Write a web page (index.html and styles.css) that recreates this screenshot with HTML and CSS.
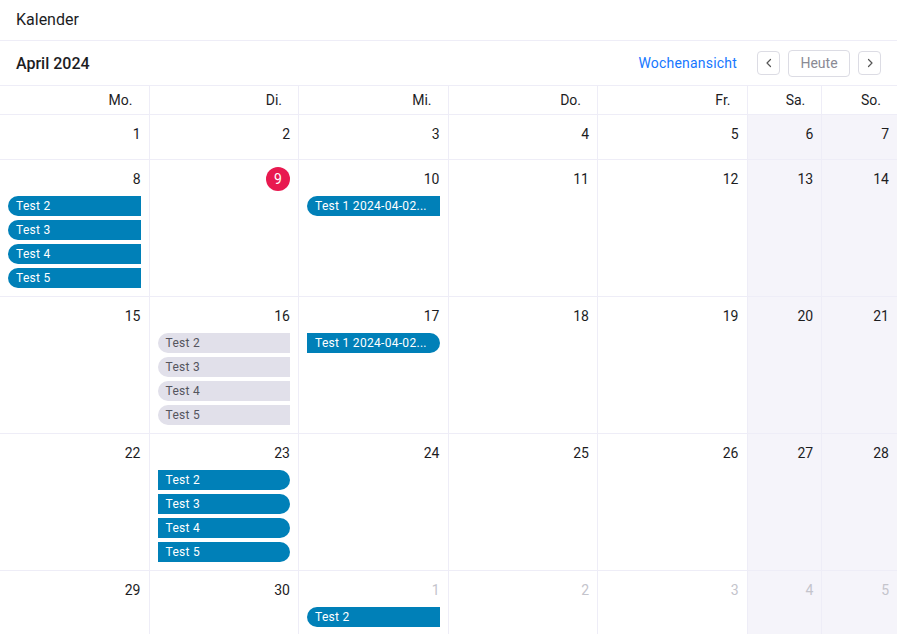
FILE: index.html
```html
<!DOCTYPE html>
<html lang="de">
<head>
<meta charset="utf-8">
<title>Kalender</title>
<link rel="stylesheet" href="styles.css">
</head>
<body>
<div class="app">
  <div class="titlebar">Kalender</div>
  <div class="toolbar">
    <div class="month">April 2024</div>
    <div class="actions">
      <a class="view-link">Wochenansicht</a>
      <button class="icon-btn" aria-label="zurück"><svg width="10" height="10" viewBox="0 0 10 10"><path d="M6.5 1.5 L3 5 L6.5 8.5" fill="none" stroke="#555" stroke-width="1.2" stroke-linecap="round" stroke-linejoin="round"/></svg></button>
      <button class="today-btn">Heute</button>
      <button class="icon-btn" aria-label="weiter"><svg width="10" height="10" viewBox="0 0 10 10"><path d="M3.5 1.5 L7 5 L3.5 8.5" fill="none" stroke="#555" stroke-width="1.2" stroke-linecap="round" stroke-linejoin="round"/></svg></button>
    </div>
  </div>
  <div class="grid">
    <div class="head">Mo.</div><div class="head">Di.</div><div class="head">Mi.</div><div class="head">Do.</div><div class="head">Fr.</div><div class="head">Sa.</div><div class="head">So.</div>

    <div class="cell w1"><div class="num">1</div></div>
    <div class="cell w1"><div class="num">2</div></div>
    <div class="cell w1"><div class="num">3</div></div>
    <div class="cell w1"><div class="num">4</div></div>
    <div class="cell w1"><div class="num">5</div></div>
    <div class="cell w1 weekend"><div class="num">6</div></div>
    <div class="cell w1 weekend"><div class="num">7</div></div>

    <div class="cell"><div class="num">8</div>
      <div class="ev blue start">Test 2</div><div class="ev blue start">Test 3</div><div class="ev blue start">Test 4</div><div class="ev blue start">Test 5</div>
    </div>
    <div class="cell"><div class="num"><span class="today">9</span></div></div>
    <div class="cell"><div class="num">10</div>
      <div class="ev blue start">Test 1 2024-04-02...</div>
    </div>
    <div class="cell"><div class="num">11</div></div>
    <div class="cell"><div class="num">12</div></div>
    <div class="cell weekend"><div class="num">13</div></div>
    <div class="cell weekend"><div class="num">14</div></div>

    <div class="cell"><div class="num">15</div></div>
    <div class="cell"><div class="num">16</div>
      <div class="ev grey start">Test 2</div><div class="ev grey start">Test 3</div><div class="ev grey start">Test 4</div><div class="ev grey start">Test 5</div>
    </div>
    <div class="cell"><div class="num">17</div>
      <div class="ev blue end">Test 1 2024-04-02...</div>
    </div>
    <div class="cell"><div class="num">18</div></div>
    <div class="cell"><div class="num">19</div></div>
    <div class="cell weekend"><div class="num">20</div></div>
    <div class="cell weekend"><div class="num">21</div></div>

    <div class="cell"><div class="num">22</div></div>
    <div class="cell"><div class="num">23</div>
      <div class="ev blue end">Test 2</div><div class="ev blue end">Test 3</div><div class="ev blue end">Test 4</div><div class="ev blue end">Test 5</div>
    </div>
    <div class="cell"><div class="num">24</div></div>
    <div class="cell"><div class="num">25</div></div>
    <div class="cell"><div class="num">26</div></div>
    <div class="cell weekend"><div class="num">27</div></div>
    <div class="cell weekend"><div class="num">28</div></div>

    <div class="cell last"><div class="num">29</div></div>
    <div class="cell last"><div class="num">30</div></div>
    <div class="cell last"><div class="num other">1</div>
      <div class="ev blue start">Test 2</div>
    </div>
    <div class="cell last"><div class="num other">2</div></div>
    <div class="cell last"><div class="num other">3</div></div>
    <div class="cell last weekend"><div class="num other">4</div></div>
    <div class="cell last weekend"><div class="num other">5</div></div>
  </div>
</div>
</body>
</html>
```
FILE: styles.css
```css
* { box-sizing: border-box; }
html, body { margin: 0; padding: 0; background: #fff; }
body {
  font-family: Roboto, "Liberation Sans", sans-serif;
  color: #1d1d1f;
  width: 897px;
  height: 634px;
  overflow: hidden;
}
.titlebar {
  height: 41px;
  padding: 0 16px 2px;
  display: flex;
  align-items: center;
  font-size: 16px;
  border-bottom: 1px solid #eeedf7;
}
.toolbar {
  height: 45px;
  padding: 0 16px;
  display: flex;
  align-items: center;
  justify-content: space-between;
  border-bottom: 1px solid #eeedf7;
}
.month { font-size: 16px; font-weight: 500; }
.actions { display: flex; align-items: center; gap: 8px; }
.view-link {
  color: #1677ff;
  font-size: 14px;
  letter-spacing: 0.2px;
  margin-right: 12px;
  cursor: pointer;
}
.icon-btn, .today-btn {
  font-family: inherit;
  background: #fff;
  border: 1px solid #dcdce4;
  border-radius: 4px;
  display: flex;
  align-items: center;
  justify-content: center;
  padding: 0;
}
.icon-btn { width: 23px; height: 24px; }
.today-btn {
  height: 27px;
  width: 62px;
  font-size: 14px;
  color: #8a8a94;
}
.grid {
  display: grid;
  grid-template-columns: 2fr 2fr 2fr 2fr 2fr 1fr 1fr;
  grid-template-rows: 29px 45px 137px 137px 137px 80px;
}
.head {
  font-size: 14px;
  text-align: right;
  padding: 6px 16px 0 0;
  border-right: 1px solid #eeedf7;
  border-bottom: 1px solid #eeedf7;
}
.head:nth-child(7) { border-right: none; }
.cell {
  border-right: 1px solid #eeedf7;
  border-bottom: 1px solid #eeedf7;
  padding: 7px 8px 0 8px;
  display: flex;
  flex-direction: column;
  gap: 4px;
}
.cell:nth-child(7n) { border-right: none; }
.cell.weekend { background: #f5f4fa; }
.num {
  height: 24px;
  display: flex;
  justify-content: flex-end;
  align-items: center;
  font-size: 14px;
  margin-bottom: 1px;
}
.num.other { color: #c4c4cc; }
.today {
  width: 24px;
  height: 24px;
  border-radius: 50%;
  background: #e8194f;
  color: #fff;
  display: flex;
  align-items: center;
  justify-content: center;
}
.ev {
  height: 20px;
  line-height: 20px;
  font-size: 12px;
  letter-spacing: 0.3px;
  padding: 0 8px;
  white-space: nowrap;
  overflow: hidden;
}
.ev.blue { background: #0080b8; color: #fff; }
.ev.grey { background: #e1e0ea; color: #55555e; }
.ev.start { border-radius: 10px 0 0 10px; }
.ev.end { border-radius: 0 10px 10px 0; }
```
